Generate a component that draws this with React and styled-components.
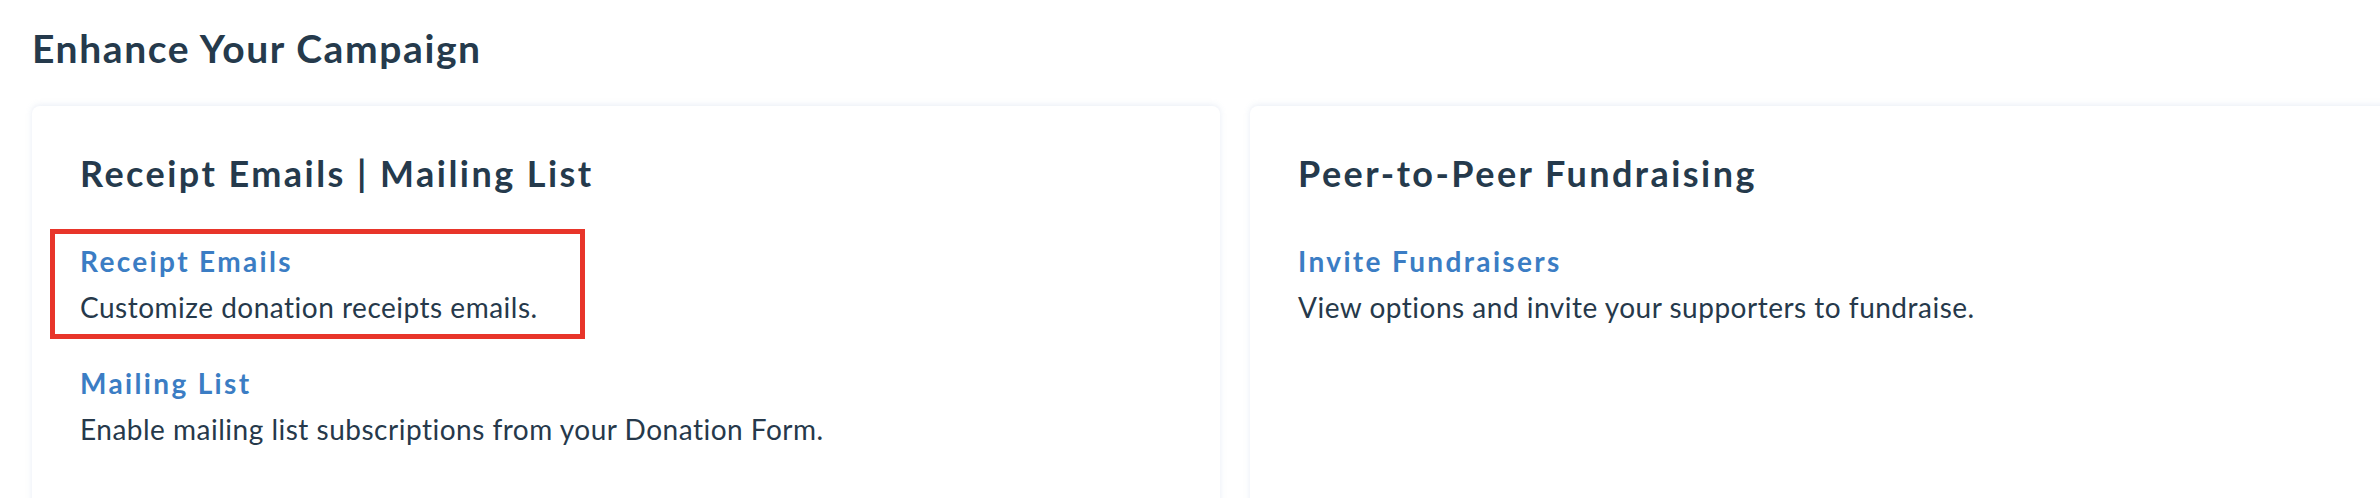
import React from "react";
import styled, { createGlobalStyle } from "styled-components";

const Global = createGlobalStyle`
  html, body { margin: 0; padding: 0; background: #ffffff; }
  body { overflow: hidden; font-family: Lato, "Open Sans", sans-serif; }
`;

const Page = styled.div`
  padding: 24px 0 0 32px;
  height: 498px;
  box-sizing: border-box;
  overflow: hidden;
`;

const Title = styled.h1`
  margin: 0 0 34px;
  font-size: 39px;
  line-height: 48px;
  font-weight: 700;
  letter-spacing: 1.6px;
  color: #253a4c;
`;

const Cards = styled.div`
  display: grid;
  grid-template-columns: 1188px 1188px;
  gap: 30px;
`;

const Card = styled.section`
  background: #ffffff;
  border-radius: 8px;
  box-shadow: 0 -1px 6px rgba(150, 175, 210, 0.22);
  padding: 45px 48px 120px;
  min-height: 400px;
`;

const CardTitle = styled.h2`
  margin: 0 0 34px;
  font-size: 36px;
  line-height: 44px;
  font-weight: 700;
  letter-spacing: 2.45px;
  color: #253a4c;
`;

const List = styled.div`
  display: flex;
  flex-direction: column;
  align-items: flex-start;
  gap: 12px;
`;

const Item = styled.div`
  margin-left: -30px;
  border: 5px solid ${(p) => (p.$highlight ? "#e8352a" : "transparent")};
  padding: 4px 42px 4px 25px;
`;

const ItemLink = styled.a`
  display: block;
  font-size: 28px;
  line-height: 46px;
  font-weight: 700;
  letter-spacing: 2.35px;
  color: #3b7dc4;
  text-decoration: none;
`;

const ItemText = styled.p`
  margin: 0;
  font-size: 28px;
  line-height: 46px;
  font-weight: 400;
  letter-spacing: 0.5px;
  color: #26394b;
`;

const sections = [
  {
    title: "Receipt Emails | Mailing List",
    items: [
      { link: "Receipt Emails", text: "Customize donation receipts emails.", highlight: true },
      { link: "Mailing List", text: "Enable mailing list subscriptions from your Donation Form." },
    ],
  },
  {
    title: "Peer-to-Peer Fundraising",
    items: [
      { link: "Invite Fundraisers", text: "View options and invite your supporters to fundraise." },
    ],
  },
];

export default function App() {
  return (
    <>
      <Global />
      <Page>
        <Title>Enhance Your Campaign</Title>
        <Cards>
          {sections.map((s) => (
            <Card key={s.title}>
              <CardTitle>{s.title}</CardTitle>
              <List>
                {s.items.map((it) => (
                  <Item key={it.link} $highlight={it.highlight}>
                    <ItemLink href="#">{it.link}</ItemLink>
                    <ItemText>{it.text}</ItemText>
                  </Item>
                ))}
              </List>
            </Card>
          ))}
        </Cards>
      </Page>
    </>
  );
}
